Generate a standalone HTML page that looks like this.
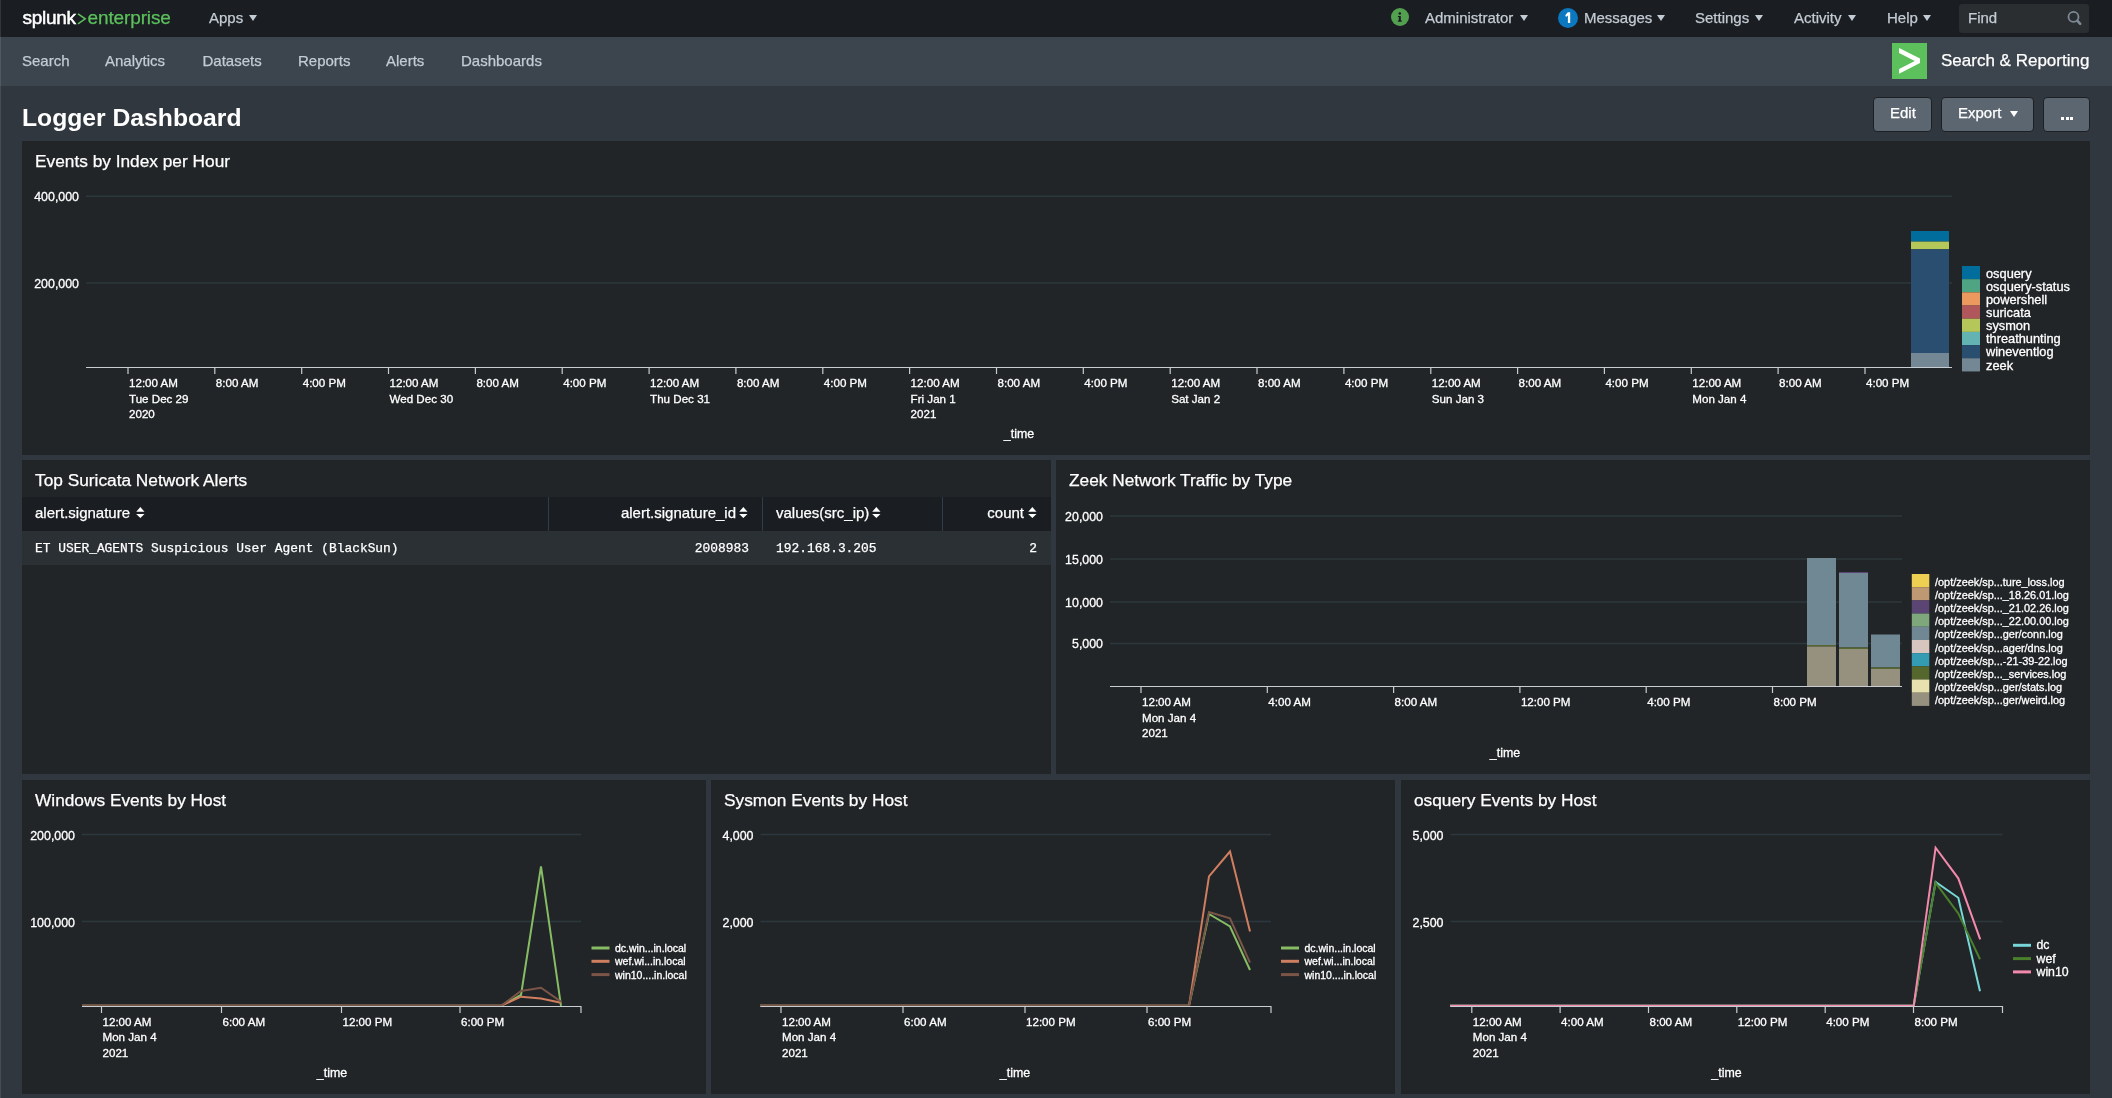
<!DOCTYPE html><html><head><meta charset="utf-8"><title>Logger Dashboard</title><style>
html,body{margin:0;padding:0;}
body{width:2112px;height:1098px;overflow:hidden;background:#31373e;font-family:"Liberation Sans",sans-serif;position:relative;}
.abs{position:absolute;white-space:nowrap;}
.hdr{position:absolute;left:0;top:0;width:2112px;height:37px;background:#1a1d21;}
.app{position:absolute;left:0;top:37px;width:2112px;height:49px;background:#3c444d;}
.ht{position:absolute;color:#c3cbd4;font-size:15px;line-height:18px;white-space:nowrap;margin-top:-0.5px;}
.caret{position:absolute;width:0;height:0;border-left:4.5px solid transparent;border-right:4.5px solid transparent;border-top:6px solid #c3cbd4;}
.panel{position:absolute;background:#212527;overflow:hidden;}
.ptitle{position:absolute;color:#fff;font-size:17.3px;line-height:20px;white-space:nowrap;}
.btn{position:absolute;top:97px;height:35px;box-sizing:border-box;background:#5c6670;border:1px solid #1c2024;border-radius:4px;color:#fff;font-size:15px;}
svg text{font-family:"Liberation Sans",sans-serif;stroke-width:0.3px;}
#root div,#root span{-webkit-text-stroke:0.25px currentColor;}

</style></head><body><div id="root" style="position:absolute;left:0;top:0;width:2112px;height:1098px;overflow:hidden;will-change:transform;background:#31373e;">
<div class="hdr"></div>
<div class="abs" style="left:22.5px;top:5.5px;font-size:19px;line-height:24px;letter-spacing:-0.3px;color:#fff;-webkit-text-stroke:0.5px #fff;">splunk</div>
<svg class="abs" style="left:76px;top:12px;" width="12" height="14" viewBox="0 0 12 14"><polyline points="2,1.8 9.2,6.8 2,11.8" fill="none" stroke="#5cc05c" stroke-width="1.6"/></svg>
<div class="abs" style="left:87.5px;top:5.5px;font-size:19px;line-height:24px;letter-spacing:-0.12px;color:#5cc05c;">enterprise</div>
<div class="ht" style="left:209px;top:9px;">Apps</div><div class="caret" style="left:248.5px;top:15px;"></div>
<div class="abs" style="left:1391px;top:8px;width:18px;height:18px;border-radius:50%;background:#53a051;"></div>
<svg class="abs" style="left:1391px;top:8px;" width="18" height="18" viewBox="1391 8 18 18"><circle cx="1399.8" cy="13.5" r="1.3" fill="#1a1d21"/><polygon points="1397.9,16.1 1400.8,16.1 1400.8,20.5 1401.8,20.6 1401.8,21.7 1397.9,21.7 1397.9,20.6 1398.8,20.5 1398.8,17.1 1397.9,17.0" fill="#1a1d21"/></svg>
<div class="ht" style="left:1425px;top:9px;">Administrator</div><div class="caret" style="left:1519.5px;top:15px;"></div>
<div class="abs" style="left:1558px;top:8px;width:20px;height:20px;border-radius:50%;background:#0c78bf;"></div>
<svg class="abs" style="left:1558px;top:8px;" width="20" height="20" viewBox="1558 8 20 20"><polygon points="1567.8,12.3 1570.2,12.3 1570.2,23 1567.9,23 1567.9,15.6 1566,16.9 1565.3,15.3" fill="#fff"/></svg>
<div class="ht" style="left:1584px;top:9px;">Messages</div><div class="caret" style="left:1656.5px;top:15px;"></div>
<div class="ht" style="left:1695px;top:9px;">Settings</div><div class="caret" style="left:1755px;top:15px;"></div>
<div class="ht" style="left:1794px;top:9px;">Activity</div><div class="caret" style="left:1848px;top:15px;"></div>
<div class="ht" style="left:1887px;top:9px;">Help</div><div class="caret" style="left:1923px;top:15px;"></div>
<div class="abs" style="left:1959px;top:4px;width:130px;height:29px;background:#2a2e31;border-radius:3px;"></div>
<div class="ht" style="left:1968px;top:9px;">Find</div>
<svg class="abs" style="left:2060px;top:6px;" width="26" height="24" viewBox="2060 6 26 24"><circle cx="2073.5" cy="16.9" r="5" fill="none" stroke="#7d8995" stroke-width="1.8"/><line x1="2077.3" y1="20.7" x2="2080.2" y2="23.8" stroke="#7d8995" stroke-width="2.6" stroke-linecap="round"/></svg>
<div class="app"></div>
<div class="ht" style="left:22px;top:52px;">Search</div>
<div class="ht" style="left:105px;top:52px;">Analytics</div>
<div class="ht" style="left:202.5px;top:52px;">Datasets</div>
<div class="ht" style="left:298px;top:52px;">Reports</div>
<div class="ht" style="left:386px;top:52px;">Alerts</div>
<div class="ht" style="left:461px;top:52px;">Dashboards</div>
<div class="abs" style="left:1892px;top:43px;width:35px;height:36px;background:#5cc05c;"></div>
<svg class="abs" style="left:1892px;top:43px;" width="35" height="36" viewBox="0 0 35 36"><polygon points="7.1,5.1 28,15.6 28,20.1 7.1,30.7 7.1,26.1 22.8,17.9 7.1,9.9" fill="#fff"/></svg>
<div class="abs" style="left:1941px;top:51px;color:#fff;font-size:17px;line-height:20px;">Search &amp; Reporting</div>
<div class="abs" style="left:0;top:0;width:1px;height:1098px;background:rgba(255,255,255,0.11);"></div>
<div class="abs" style="left:22px;top:104px;color:#fff;font-size:24.7px;line-height:28px;font-weight:bold;-webkit-text-stroke:0;">Logger Dashboard</div>
<div class="btn" style="left:1873px;width:59px;"><span class="abs" style="left:16px;top:5.5px;line-height:18px;">Edit</span></div>
<div class="btn" style="left:1941px;width:93px;"><span class="abs" style="left:16px;top:5.5px;line-height:18px;">Export</span><span class="caret" style="left:67.5px;top:13px;border-top-color:#fff;"></span></div>
<div class="btn" style="left:2043px;width:47px;"><span class="abs" style="left:17px;top:19px;width:3px;height:3px;background:#fff;"></span><span class="abs" style="left:21.5px;top:19px;width:3px;height:3px;background:#fff;"></span><span class="abs" style="left:26px;top:19px;width:3px;height:3px;background:#fff;"></span></div>
<div class="panel" style="left:22px;top:141px;width:2068px;height:314px;">
<div class="ptitle" style="left:13px;top:10px;">Events by Index per Hour</div>
<svg class="abs" style="left:0;top:0;" width="2068" height="314" viewBox="22 141 2068 314">
<line x1="86" y1="196.3" x2="1952" y2="196.3" stroke="#2c383d" stroke-width="1.5"/>
<text x="79" y="201.4" font-size="12.4" fill="#ffffff" stroke="#ffffff" text-anchor="end">400,000</text>
<line x1="86" y1="282.9" x2="1952" y2="282.9" stroke="#2c383d" stroke-width="1.5"/>
<text x="79" y="288.0" font-size="12.4" fill="#ffffff" stroke="#ffffff" text-anchor="end">200,000</text>
<rect x="1911" y="231" width="38" height="10.599999999999994" fill="#006d9c"/>
<rect x="1911" y="241.6" width="38" height="7.700000000000017" fill="#b6c75a"/>
<rect x="1911" y="249.3" width="38" height="103.69999999999999" fill="#294e70"/>
<rect x="1911" y="353" width="38" height="14.5" fill="#738795"/>
<line x1="86" y1="367.5" x2="1952" y2="367.5" stroke="#c8cdd2" stroke-width="1.2"/>
<line x1="128.0" y1="367" x2="128.0" y2="374" stroke="#c8cdd2" stroke-width="1.2"/>
<text x="129.0" y="387.0" font-size="11.6" fill="#ffffff" stroke="#ffffff" text-anchor="start">12:00 AM</text>
<text x="129.0" y="402.5" font-size="11.6" fill="#ffffff" stroke="#ffffff" text-anchor="start">Tue Dec 29</text>
<text x="129.0" y="418.0" font-size="11.6" fill="#ffffff" stroke="#ffffff" text-anchor="start">2020</text>
<line x1="214.8" y1="367" x2="214.8" y2="374" stroke="#c8cdd2" stroke-width="1.2"/>
<text x="215.8" y="387.0" font-size="11.6" fill="#ffffff" stroke="#ffffff" text-anchor="start">8:00 AM</text>
<line x1="301.7" y1="367" x2="301.7" y2="374" stroke="#c8cdd2" stroke-width="1.2"/>
<text x="302.7" y="387.0" font-size="11.6" fill="#ffffff" stroke="#ffffff" text-anchor="start">4:00 PM</text>
<line x1="388.5" y1="367" x2="388.5" y2="374" stroke="#c8cdd2" stroke-width="1.2"/>
<text x="389.5" y="387.0" font-size="11.6" fill="#ffffff" stroke="#ffffff" text-anchor="start">12:00 AM</text>
<text x="389.5" y="402.5" font-size="11.6" fill="#ffffff" stroke="#ffffff" text-anchor="start">Wed Dec 30</text>
<line x1="475.4" y1="367" x2="475.4" y2="374" stroke="#c8cdd2" stroke-width="1.2"/>
<text x="476.4" y="387.0" font-size="11.6" fill="#ffffff" stroke="#ffffff" text-anchor="start">8:00 AM</text>
<line x1="562.2" y1="367" x2="562.2" y2="374" stroke="#c8cdd2" stroke-width="1.2"/>
<text x="563.2" y="387.0" font-size="11.6" fill="#ffffff" stroke="#ffffff" text-anchor="start">4:00 PM</text>
<line x1="649.1" y1="367" x2="649.1" y2="374" stroke="#c8cdd2" stroke-width="1.2"/>
<text x="650.1" y="387.0" font-size="11.6" fill="#ffffff" stroke="#ffffff" text-anchor="start">12:00 AM</text>
<text x="650.1" y="402.5" font-size="11.6" fill="#ffffff" stroke="#ffffff" text-anchor="start">Thu Dec 31</text>
<line x1="735.9" y1="367" x2="735.9" y2="374" stroke="#c8cdd2" stroke-width="1.2"/>
<text x="736.9" y="387.0" font-size="11.6" fill="#ffffff" stroke="#ffffff" text-anchor="start">8:00 AM</text>
<line x1="822.8" y1="367" x2="822.8" y2="374" stroke="#c8cdd2" stroke-width="1.2"/>
<text x="823.8" y="387.0" font-size="11.6" fill="#ffffff" stroke="#ffffff" text-anchor="start">4:00 PM</text>
<line x1="909.6" y1="367" x2="909.6" y2="374" stroke="#c8cdd2" stroke-width="1.2"/>
<text x="910.6" y="387.0" font-size="11.6" fill="#ffffff" stroke="#ffffff" text-anchor="start">12:00 AM</text>
<text x="910.6" y="402.5" font-size="11.6" fill="#ffffff" stroke="#ffffff" text-anchor="start">Fri Jan 1</text>
<text x="910.6" y="418.0" font-size="11.6" fill="#ffffff" stroke="#ffffff" text-anchor="start">2021</text>
<line x1="996.5" y1="367" x2="996.5" y2="374" stroke="#c8cdd2" stroke-width="1.2"/>
<text x="997.5" y="387.0" font-size="11.6" fill="#ffffff" stroke="#ffffff" text-anchor="start">8:00 AM</text>
<line x1="1083.3" y1="367" x2="1083.3" y2="374" stroke="#c8cdd2" stroke-width="1.2"/>
<text x="1084.3" y="387.0" font-size="11.6" fill="#ffffff" stroke="#ffffff" text-anchor="start">4:00 PM</text>
<line x1="1170.2" y1="367" x2="1170.2" y2="374" stroke="#c8cdd2" stroke-width="1.2"/>
<text x="1171.2" y="387.0" font-size="11.6" fill="#ffffff" stroke="#ffffff" text-anchor="start">12:00 AM</text>
<text x="1171.2" y="402.5" font-size="11.6" fill="#ffffff" stroke="#ffffff" text-anchor="start">Sat Jan 2</text>
<line x1="1257.0" y1="367" x2="1257.0" y2="374" stroke="#c8cdd2" stroke-width="1.2"/>
<text x="1258.0" y="387.0" font-size="11.6" fill="#ffffff" stroke="#ffffff" text-anchor="start">8:00 AM</text>
<line x1="1343.9" y1="367" x2="1343.9" y2="374" stroke="#c8cdd2" stroke-width="1.2"/>
<text x="1344.9" y="387.0" font-size="11.6" fill="#ffffff" stroke="#ffffff" text-anchor="start">4:00 PM</text>
<line x1="1430.8" y1="367" x2="1430.8" y2="374" stroke="#c8cdd2" stroke-width="1.2"/>
<text x="1431.8" y="387.0" font-size="11.6" fill="#ffffff" stroke="#ffffff" text-anchor="start">12:00 AM</text>
<text x="1431.8" y="402.5" font-size="11.6" fill="#ffffff" stroke="#ffffff" text-anchor="start">Sun Jan 3</text>
<line x1="1517.6" y1="367" x2="1517.6" y2="374" stroke="#c8cdd2" stroke-width="1.2"/>
<text x="1518.6" y="387.0" font-size="11.6" fill="#ffffff" stroke="#ffffff" text-anchor="start">8:00 AM</text>
<line x1="1604.4" y1="367" x2="1604.4" y2="374" stroke="#c8cdd2" stroke-width="1.2"/>
<text x="1605.4" y="387.0" font-size="11.6" fill="#ffffff" stroke="#ffffff" text-anchor="start">4:00 PM</text>
<line x1="1691.3" y1="367" x2="1691.3" y2="374" stroke="#c8cdd2" stroke-width="1.2"/>
<text x="1692.3" y="387.0" font-size="11.6" fill="#ffffff" stroke="#ffffff" text-anchor="start">12:00 AM</text>
<text x="1692.3" y="402.5" font-size="11.6" fill="#ffffff" stroke="#ffffff" text-anchor="start">Mon Jan 4</text>
<line x1="1778.1" y1="367" x2="1778.1" y2="374" stroke="#c8cdd2" stroke-width="1.2"/>
<text x="1779.1" y="387.0" font-size="11.6" fill="#ffffff" stroke="#ffffff" text-anchor="start">8:00 AM</text>
<line x1="1865.0" y1="367" x2="1865.0" y2="374" stroke="#c8cdd2" stroke-width="1.2"/>
<text x="1866.0" y="387.0" font-size="11.6" fill="#ffffff" stroke="#ffffff" text-anchor="start">4:00 PM</text>
<text x="1019" y="437.5" font-size="12.4" fill="#ffffff" stroke="#ffffff" text-anchor="middle">_time</text>
<rect x="1962" y="266.00" width="18" height="13.18" fill="#006d9c"/>
<text x="1986" y="277.80" font-size="12.8" fill="#ffffff" stroke="#ffffff" text-anchor="start">osquery</text>
<rect x="1962" y="279.18" width="18" height="13.18" fill="#4fa484"/>
<text x="1986" y="290.91" font-size="12.8" fill="#ffffff" stroke="#ffffff" text-anchor="start">osquery-status</text>
<rect x="1962" y="292.36" width="18" height="13.18" fill="#ec9960"/>
<text x="1986" y="304.02" font-size="12.8" fill="#ffffff" stroke="#ffffff" text-anchor="start">powershell</text>
<rect x="1962" y="305.54" width="18" height="13.18" fill="#af575a"/>
<text x="1986" y="317.13" font-size="12.8" fill="#ffffff" stroke="#ffffff" text-anchor="start">suricata</text>
<rect x="1962" y="318.72" width="18" height="13.18" fill="#b6c75a"/>
<text x="1986" y="330.24" font-size="12.8" fill="#ffffff" stroke="#ffffff" text-anchor="start">sysmon</text>
<rect x="1962" y="331.90" width="18" height="13.18" fill="#62b3b2"/>
<text x="1986" y="343.35" font-size="12.8" fill="#ffffff" stroke="#ffffff" text-anchor="start">threathunting</text>
<rect x="1962" y="345.08" width="18" height="13.18" fill="#294e70"/>
<text x="1986" y="356.46" font-size="12.8" fill="#ffffff" stroke="#ffffff" text-anchor="start">wineventlog</text>
<rect x="1962" y="358.26" width="18" height="13.18" fill="#738795"/>
<text x="1986" y="369.57" font-size="12.8" fill="#ffffff" stroke="#ffffff" text-anchor="start">zeek</text>
</svg>
</div>
<div class="panel" style="left:22px;top:460px;width:1029px;height:314px;">
<div class="ptitle" style="left:13px;top:10px;">Top Suricata Network Alerts</div>
<div class="abs" style="left:0;top:37px;width:1029px;height:34px;background:#1a1e22;"></div>
<div class="abs" style="left:0;top:71px;width:1029px;height:34px;background:#2b3034;"></div>
<div class="abs" style="left:526px;top:37px;width:1px;height:34px;background:#2f3e4a;"></div>
<div class="abs" style="left:740px;top:37px;width:1px;height:34px;background:#2f3e4a;"></div>
<div class="abs" style="left:920px;top:37px;width:1px;height:34px;background:#2f3e4a;"></div>
<div class="abs" style="left:13px;top:44px;color:#fff;font-size:15px;line-height:18px;">alert.signature</div><svg class="abs" style="left:114px;top:46px;" width="9" height="14" viewBox="0 0 9 14"><polygon points="0.2,5.7 4.35,1.1 8.5,5.7" fill="#fff"/><polygon points="0.2,8 4.35,12.1 8.5,8" fill="#fff"/></svg>
<div class="abs" style="right:315px;top:44px;color:#fff;font-size:15px;line-height:18px;">alert.signature_id</div><svg class="abs" style="left:717px;top:46px;" width="9" height="14" viewBox="0 0 9 14"><polygon points="0.2,5.7 4.35,1.1 8.5,5.7" fill="#fff"/><polygon points="0.2,8 4.35,12.1 8.5,8" fill="#fff"/></svg>
<div class="abs" style="left:754px;top:44px;color:#fff;font-size:15px;line-height:18px;">values(src_ip)</div><svg class="abs" style="left:850px;top:46px;" width="9" height="14" viewBox="0 0 9 14"><polygon points="0.2,5.7 4.35,1.1 8.5,5.7" fill="#fff"/><polygon points="0.2,8 4.35,12.1 8.5,8" fill="#fff"/></svg>
<div class="abs" style="right:27px;top:44px;color:#fff;font-size:15px;line-height:18px;">count</div><svg class="abs" style="left:1006px;top:46px;" width="9" height="14" viewBox="0 0 9 14"><polygon points="0.2,5.7 4.35,1.1 8.5,5.7" fill="#fff"/><polygon points="0.2,8 4.35,12.1 8.5,8" fill="#fff"/></svg>
<div class="abs" style="left:13px;top:81px;color:#fff;font-family:'Liberation Mono', monospace;font-size:12.9px;line-height:16px;">ET USER_AGENTS Suspicious User Agent (BlackSun)</div>
<div class="abs" style="right:302px;top:81px;color:#fff;font-family:'Liberation Mono', monospace;font-size:12.9px;line-height:16px;">2008983</div>
<div class="abs" style="left:754px;top:81px;color:#fff;font-family:'Liberation Mono', monospace;font-size:12.9px;line-height:16px;">192.168.3.205</div>
<div class="abs" style="right:14px;top:81px;color:#fff;font-family:'Liberation Mono', monospace;font-size:12.9px;line-height:16px;">2</div>
</div>
<div class="panel" style="left:1056px;top:460px;width:1034px;height:314px;">
<div class="ptitle" style="left:13px;top:10px;">Zeek Network Traffic by Type</div>
<svg class="abs" style="left:0;top:0;" width="1034" height="314" viewBox="1056 460 1034 314">
<line x1="1110" y1="516" x2="1902" y2="516" stroke="#2c383d" stroke-width="1.5"/>
<text x="1103" y="520.5" font-size="12.4" fill="#ffffff" stroke="#ffffff" text-anchor="end">20,000</text>
<line x1="1110" y1="559" x2="1902" y2="559" stroke="#2c383d" stroke-width="1.5"/>
<text x="1103" y="563.5" font-size="12.4" fill="#ffffff" stroke="#ffffff" text-anchor="end">15,000</text>
<line x1="1110" y1="602" x2="1902" y2="602" stroke="#2c383d" stroke-width="1.5"/>
<text x="1103" y="606.5" font-size="12.4" fill="#ffffff" stroke="#ffffff" text-anchor="end">10,000</text>
<line x1="1110" y1="643.5" x2="1902" y2="643.5" stroke="#2c383d" stroke-width="1.5"/>
<text x="1103" y="648.0" font-size="12.4" fill="#ffffff" stroke="#ffffff" text-anchor="end">5,000</text>
<rect x="1807" y="558" width="29" height="87" fill="#708794"/>
<rect x="1807" y="645" width="29" height="1.5" fill="#55672d"/>
<rect x="1807" y="646.5" width="29" height="39.5" fill="#96907f"/>
<rect x="1839" y="572" width="29" height="1" fill="#5a4575"/>
<rect x="1839" y="573" width="29" height="74.5" fill="#708794"/>
<rect x="1839" y="647.5" width="29" height="1.5" fill="#55672d"/>
<rect x="1839" y="649" width="29" height="37" fill="#96907f"/>
<rect x="1871" y="634.5" width="29" height="33.0" fill="#708794"/>
<rect x="1871" y="667.5" width="29" height="1.5" fill="#55672d"/>
<rect x="1871" y="669" width="29" height="17" fill="#96907f"/>
<line x1="1110" y1="686.5" x2="1902" y2="686.5" stroke="#c8cdd2" stroke-width="1.2"/>
<line x1="1141.0" y1="686" x2="1141.0" y2="693" stroke="#c8cdd2" stroke-width="1.2"/>
<text x="1142.0" y="706.0" font-size="11.6" fill="#ffffff" stroke="#ffffff" text-anchor="start">12:00 AM</text>
<text x="1142.0" y="721.5" font-size="11.6" fill="#ffffff" stroke="#ffffff" text-anchor="start">Mon Jan 4</text>
<text x="1142.0" y="737.0" font-size="11.6" fill="#ffffff" stroke="#ffffff" text-anchor="start">2021</text>
<line x1="1267.3" y1="686" x2="1267.3" y2="693" stroke="#c8cdd2" stroke-width="1.2"/>
<text x="1268.3" y="706.0" font-size="11.6" fill="#ffffff" stroke="#ffffff" text-anchor="start">4:00 AM</text>
<line x1="1393.6" y1="686" x2="1393.6" y2="693" stroke="#c8cdd2" stroke-width="1.2"/>
<text x="1394.6" y="706.0" font-size="11.6" fill="#ffffff" stroke="#ffffff" text-anchor="start">8:00 AM</text>
<line x1="1519.9" y1="686" x2="1519.9" y2="693" stroke="#c8cdd2" stroke-width="1.2"/>
<text x="1520.9" y="706.0" font-size="11.6" fill="#ffffff" stroke="#ffffff" text-anchor="start">12:00 PM</text>
<line x1="1646.2" y1="686" x2="1646.2" y2="693" stroke="#c8cdd2" stroke-width="1.2"/>
<text x="1647.2" y="706.0" font-size="11.6" fill="#ffffff" stroke="#ffffff" text-anchor="start">4:00 PM</text>
<line x1="1772.5" y1="686" x2="1772.5" y2="693" stroke="#c8cdd2" stroke-width="1.2"/>
<text x="1773.5" y="706.0" font-size="11.6" fill="#ffffff" stroke="#ffffff" text-anchor="start">8:00 PM</text>
<text x="1505" y="757" font-size="12.4" fill="#ffffff" stroke="#ffffff" text-anchor="middle">_time</text>
<rect x="1911.8" y="574.00" width="17.5" height="13.2" fill="#edd051"/>
<text x="1935" y="585.50" font-size="10.9" fill="#ffffff" stroke="#ffffff" text-anchor="start">/opt/zeek/sp...ture_loss.log</text>
<rect x="1911.8" y="587.19" width="17.5" height="13.2" fill="#bd9872"/>
<text x="1935" y="598.70" font-size="10.9" fill="#ffffff" stroke="#ffffff" text-anchor="start">/opt/zeek/sp..._18.26.01.log</text>
<rect x="1911.8" y="600.38" width="17.5" height="13.2" fill="#5a4575"/>
<text x="1935" y="611.90" font-size="10.9" fill="#ffffff" stroke="#ffffff" text-anchor="start">/opt/zeek/sp..._21.02.26.log</text>
<rect x="1911.8" y="613.57" width="17.5" height="13.2" fill="#7ea77b"/>
<text x="1935" y="625.10" font-size="10.9" fill="#ffffff" stroke="#ffffff" text-anchor="start">/opt/zeek/sp..._22.00.00.log</text>
<rect x="1911.8" y="626.76" width="17.5" height="13.2" fill="#708794"/>
<text x="1935" y="638.30" font-size="10.9" fill="#ffffff" stroke="#ffffff" text-anchor="start">/opt/zeek/sp...ger/conn.log</text>
<rect x="1911.8" y="639.95" width="17.5" height="13.2" fill="#d7c6bf"/>
<text x="1935" y="651.50" font-size="10.9" fill="#ffffff" stroke="#ffffff" text-anchor="start">/opt/zeek/sp...ager/dns.log</text>
<rect x="1911.8" y="653.14" width="17.5" height="13.2" fill="#339bb2"/>
<text x="1935" y="664.70" font-size="10.9" fill="#ffffff" stroke="#ffffff" text-anchor="start">/opt/zeek/sp...-21-39-22.log</text>
<rect x="1911.8" y="666.33" width="17.5" height="13.2" fill="#55672d"/>
<text x="1935" y="677.90" font-size="10.9" fill="#ffffff" stroke="#ffffff" text-anchor="start">/opt/zeek/sp..._services.log</text>
<rect x="1911.8" y="679.52" width="17.5" height="13.2" fill="#e6e1ae"/>
<text x="1935" y="691.10" font-size="10.9" fill="#ffffff" stroke="#ffffff" text-anchor="start">/opt/zeek/sp...ger/stats.log</text>
<rect x="1911.8" y="692.71" width="17.5" height="13.2" fill="#96907f"/>
<text x="1935" y="704.30" font-size="10.9" fill="#ffffff" stroke="#ffffff" text-anchor="start">/opt/zeek/sp...ger/weird.log</text>
</svg>
</div>
<div class="panel" style="left:22px;top:780px;width:684px;height:314px;">
<div class="ptitle" style="left:13px;top:10px;">Windows Events by Host</div>
<svg class="abs" style="left:0;top:0;" width="684" height="314" viewBox="22 780 684 314">
<line x1="82" y1="834.5" x2="581" y2="834.5" stroke="#2c383d" stroke-width="1.5"/>
<text x="75" y="839.5" font-size="12.4" fill="#ffffff" stroke="#ffffff" text-anchor="end">200,000</text>
<line x1="82" y1="921.5" x2="581" y2="921.5" stroke="#2c383d" stroke-width="1.5"/>
<text x="75" y="926.5" font-size="12.4" fill="#ffffff" stroke="#ffffff" text-anchor="end">100,000</text>
<polyline points="82,1005.8 501,1005.8 521,995 541,866.4 561,1005.8" fill="none" stroke="#87bc65" stroke-width="2" stroke-linejoin="miter"/>
<polyline points="82,1005.8 501,1005.8 521,996.7 541,998.4 561,1002.8" fill="none" stroke="#cf7e60" stroke-width="2" stroke-linejoin="miter"/>
<polyline points="82,1005.8 501,1005.8 521,991 541,987.7 561,1001.6" fill="none" stroke="#7b5547" stroke-width="2" stroke-linejoin="miter"/>
<line x1="82" y1="1006.5" x2="581" y2="1006.5" stroke="#c8cdd2" stroke-width="1.2"/>
<line x1="581" y1="1006" x2="581" y2="1013" stroke="#c8cdd2" stroke-width="1.2"/>
<line x1="101.5" y1="1006" x2="101.5" y2="1013" stroke="#c8cdd2" stroke-width="1.2"/>
<text x="102.5" y="1026.0" font-size="11.6" fill="#ffffff" stroke="#ffffff" text-anchor="start">12:00 AM</text>
<text x="102.5" y="1041.4" font-size="11.6" fill="#ffffff" stroke="#ffffff" text-anchor="start">Mon Jan 4</text>
<text x="102.5" y="1056.8" font-size="11.6" fill="#ffffff" stroke="#ffffff" text-anchor="start">2021</text>
<line x1="221.5" y1="1006" x2="221.5" y2="1013" stroke="#c8cdd2" stroke-width="1.2"/>
<text x="222.5" y="1026.0" font-size="11.6" fill="#ffffff" stroke="#ffffff" text-anchor="start">6:00 AM</text>
<line x1="341.5" y1="1006" x2="341.5" y2="1013" stroke="#c8cdd2" stroke-width="1.2"/>
<text x="342.5" y="1026.0" font-size="11.6" fill="#ffffff" stroke="#ffffff" text-anchor="start">12:00 PM</text>
<line x1="460.0" y1="1006" x2="460.0" y2="1013" stroke="#c8cdd2" stroke-width="1.2"/>
<text x="461.0" y="1026.0" font-size="11.6" fill="#ffffff" stroke="#ffffff" text-anchor="start">6:00 PM</text>
<line x1="591.5" y1="948.0" x2="609.5" y2="948.0" stroke="#87bc65" stroke-width="3"/>
<text x="615.0" y="952.0" font-size="10.5" fill="#ffffff" stroke="#ffffff" text-anchor="start">dc.win...in.local</text>
<line x1="591.5" y1="961.3" x2="609.5" y2="961.3" stroke="#cf7e60" stroke-width="3"/>
<text x="615.0" y="965.3" font-size="10.5" fill="#ffffff" stroke="#ffffff" text-anchor="start">wef.wi...in.local</text>
<line x1="591.5" y1="974.6" x2="609.5" y2="974.6" stroke="#7b5547" stroke-width="3"/>
<text x="615.0" y="978.6" font-size="10.5" fill="#ffffff" stroke="#ffffff" text-anchor="start">win10....in.local</text>
<text x="332" y="1077" font-size="12.4" fill="#ffffff" stroke="#ffffff" text-anchor="middle">_time</text>
</svg>
</div>
<div class="panel" style="left:711px;top:780px;width:684px;height:314px;">
<div class="ptitle" style="left:13px;top:10px;">Sysmon Events by Host</div>
<svg class="abs" style="left:0;top:0;" width="684" height="314" viewBox="711 780 684 314">
<line x1="760.5" y1="834.5" x2="1271" y2="834.5" stroke="#2c383d" stroke-width="1.5"/>
<text x="753.5" y="839.5" font-size="12.4" fill="#ffffff" stroke="#ffffff" text-anchor="end">4,000</text>
<line x1="760.5" y1="921.5" x2="1271" y2="921.5" stroke="#2c383d" stroke-width="1.5"/>
<text x="753.5" y="926.5" font-size="12.4" fill="#ffffff" stroke="#ffffff" text-anchor="end">2,000</text>
<polyline points="760,1005.8 1189,1005.8 1209,914 1230,926.5 1250,970" fill="none" stroke="#87bc65" stroke-width="2" stroke-linejoin="miter"/>
<polyline points="760,1005.8 1189,1005.8 1209,876.4 1230,851.5 1250,931.5" fill="none" stroke="#cf7e60" stroke-width="2" stroke-linejoin="miter"/>
<polyline points="760,1005.8 1189,1005.8 1209,912 1230,918.3 1250,962.6" fill="none" stroke="#7b5547" stroke-width="2" stroke-linejoin="miter"/>
<line x1="760.5" y1="1006.5" x2="1271" y2="1006.5" stroke="#c8cdd2" stroke-width="1.2"/>
<line x1="1271" y1="1006" x2="1271" y2="1013" stroke="#c8cdd2" stroke-width="1.2"/>
<line x1="781.0" y1="1006" x2="781.0" y2="1013" stroke="#c8cdd2" stroke-width="1.2"/>
<text x="782.0" y="1026.0" font-size="11.6" fill="#ffffff" stroke="#ffffff" text-anchor="start">12:00 AM</text>
<text x="782.0" y="1041.4" font-size="11.6" fill="#ffffff" stroke="#ffffff" text-anchor="start">Mon Jan 4</text>
<text x="782.0" y="1056.8" font-size="11.6" fill="#ffffff" stroke="#ffffff" text-anchor="start">2021</text>
<line x1="903.0" y1="1006" x2="903.0" y2="1013" stroke="#c8cdd2" stroke-width="1.2"/>
<text x="904.0" y="1026.0" font-size="11.6" fill="#ffffff" stroke="#ffffff" text-anchor="start">6:00 AM</text>
<line x1="1025.0" y1="1006" x2="1025.0" y2="1013" stroke="#c8cdd2" stroke-width="1.2"/>
<text x="1026.0" y="1026.0" font-size="11.6" fill="#ffffff" stroke="#ffffff" text-anchor="start">12:00 PM</text>
<line x1="1147.0" y1="1006" x2="1147.0" y2="1013" stroke="#c8cdd2" stroke-width="1.2"/>
<text x="1148.0" y="1026.0" font-size="11.6" fill="#ffffff" stroke="#ffffff" text-anchor="start">6:00 PM</text>
<line x1="1281" y1="948.0" x2="1299" y2="948.0" stroke="#87bc65" stroke-width="3"/>
<text x="1304.5" y="952.0" font-size="10.5" fill="#ffffff" stroke="#ffffff" text-anchor="start">dc.win...in.local</text>
<line x1="1281" y1="961.3" x2="1299" y2="961.3" stroke="#cf7e60" stroke-width="3"/>
<text x="1304.5" y="965.3" font-size="10.5" fill="#ffffff" stroke="#ffffff" text-anchor="start">wef.wi...in.local</text>
<line x1="1281" y1="974.6" x2="1299" y2="974.6" stroke="#7b5547" stroke-width="3"/>
<text x="1304.5" y="978.6" font-size="10.5" fill="#ffffff" stroke="#ffffff" text-anchor="start">win10....in.local</text>
<text x="1015" y="1077" font-size="12.4" fill="#ffffff" stroke="#ffffff" text-anchor="middle">_time</text>
</svg>
</div>
<div class="panel" style="left:1401px;top:780px;width:689px;height:314px;">
<div class="ptitle" style="left:13px;top:10px;">osquery Events by Host</div>
<svg class="abs" style="left:0;top:0;" width="689" height="314" viewBox="1401 780 689 314">
<line x1="1450.5" y1="834.5" x2="2002.5" y2="834.5" stroke="#2c383d" stroke-width="1.5"/>
<text x="1443.5" y="839.5" font-size="12.4" fill="#ffffff" stroke="#ffffff" text-anchor="end">5,000</text>
<line x1="1450.5" y1="921.5" x2="2002.5" y2="921.5" stroke="#2c383d" stroke-width="1.5"/>
<text x="1443.5" y="926.5" font-size="12.4" fill="#ffffff" stroke="#ffffff" text-anchor="end">2,500</text>
<polyline points="1450,1005.8 1913.7,1005.8 1935.6,881.9 1958.3,897.8 1980,991.2" fill="none" stroke="#77d6d8" stroke-width="2" stroke-linejoin="miter"/>
<polyline points="1450,1005.8 1913.7,1005.8 1935.6,882.8 1958.3,913.4 1980,959.3" fill="none" stroke="#4a7f2c" stroke-width="2" stroke-linejoin="miter"/>
<polyline points="1450,1005.8 1913.7,1005.8 1935.6,847.7 1958.3,878.3 1980.2,939.3" fill="none" stroke="#f589ad" stroke-width="2" stroke-linejoin="miter"/>
<line x1="1450.5" y1="1006.5" x2="2002.5" y2="1006.5" stroke="#c8cdd2" stroke-width="1.2"/>
<line x1="2002.5" y1="1006" x2="2002.5" y2="1013" stroke="#c8cdd2" stroke-width="1.2"/>
<line x1="1471.8" y1="1006" x2="1471.8" y2="1013" stroke="#c8cdd2" stroke-width="1.2"/>
<text x="1472.8" y="1026.0" font-size="11.6" fill="#ffffff" stroke="#ffffff" text-anchor="start">12:00 AM</text>
<text x="1472.8" y="1041.4" font-size="11.6" fill="#ffffff" stroke="#ffffff" text-anchor="start">Mon Jan 4</text>
<text x="1472.8" y="1056.8" font-size="11.6" fill="#ffffff" stroke="#ffffff" text-anchor="start">2021</text>
<line x1="1560.1" y1="1006" x2="1560.1" y2="1013" stroke="#c8cdd2" stroke-width="1.2"/>
<text x="1561.1" y="1026.0" font-size="11.6" fill="#ffffff" stroke="#ffffff" text-anchor="start">4:00 AM</text>
<line x1="1648.5" y1="1006" x2="1648.5" y2="1013" stroke="#c8cdd2" stroke-width="1.2"/>
<text x="1649.5" y="1026.0" font-size="11.6" fill="#ffffff" stroke="#ffffff" text-anchor="start">8:00 AM</text>
<line x1="1736.8" y1="1006" x2="1736.8" y2="1013" stroke="#c8cdd2" stroke-width="1.2"/>
<text x="1737.8" y="1026.0" font-size="11.6" fill="#ffffff" stroke="#ffffff" text-anchor="start">12:00 PM</text>
<line x1="1825.2" y1="1006" x2="1825.2" y2="1013" stroke="#c8cdd2" stroke-width="1.2"/>
<text x="1826.2" y="1026.0" font-size="11.6" fill="#ffffff" stroke="#ffffff" text-anchor="start">4:00 PM</text>
<line x1="1913.5" y1="1006" x2="1913.5" y2="1013" stroke="#c8cdd2" stroke-width="1.2"/>
<text x="1914.5" y="1026.0" font-size="11.6" fill="#ffffff" stroke="#ffffff" text-anchor="start">8:00 PM</text>
<line x1="2013" y1="945.3" x2="2031" y2="945.3" stroke="#77d6d8" stroke-width="3"/>
<text x="2036.5" y="949.3" font-size="12.3" fill="#ffffff" stroke="#ffffff" text-anchor="start">dc</text>
<line x1="2013" y1="958.5999999999999" x2="2031" y2="958.5999999999999" stroke="#4a7f2c" stroke-width="3"/>
<text x="2036.5" y="962.6" font-size="12.3" fill="#ffffff" stroke="#ffffff" text-anchor="start">wef</text>
<line x1="2013" y1="971.9" x2="2031" y2="971.9" stroke="#f589ad" stroke-width="3"/>
<text x="2036.5" y="975.9" font-size="12.3" fill="#ffffff" stroke="#ffffff" text-anchor="start">win10</text>
<text x="1726.5" y="1077" font-size="12.4" fill="#ffffff" stroke="#ffffff" text-anchor="middle">_time</text>
</svg>
</div>
</div></body></html>
